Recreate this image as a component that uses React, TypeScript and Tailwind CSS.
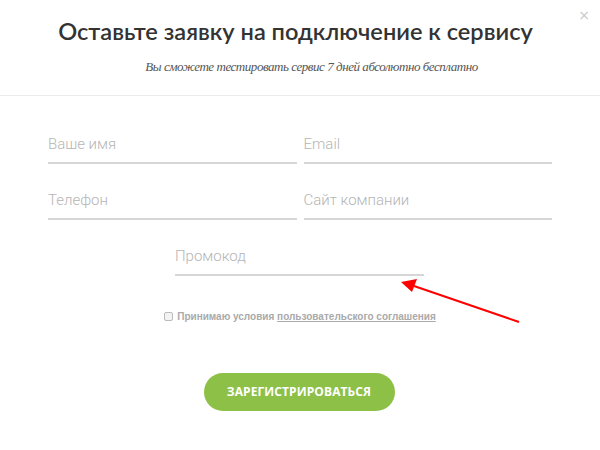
export default function App() {
  return (
    <div className="relative w-[600px] h-[450px] bg-white overflow-hidden">
      <button className="absolute right-[10px] top-[8px] text-[14px] leading-none text-[#c8c8c8] font-['DejaVu_Sans',sans-serif]">
        ×
      </button>
      <div className="h-[96px] border-b border-[#ececec] flex flex-col items-center pt-[15px]">
        <h1 className="mr-[9px] text-[23.6px] leading-[32px] text-[#333] font-['Lato',sans-serif] font-semibold">
          Оставьте заявку на подключение к сервису
        </h1>
        <p className="ml-[23px] mt-[11px] text-[13px] leading-[18px] italic text-[#555] font-['Liberation_Serif',serif] tracking-[-0.45px]">
          Вы сможете тестировать сервис 7 дней абсолютно бесплатно
        </p>
      </div>
      <div className="px-[48px] pt-[38px] font-['Roboto',sans-serif]">
        <div className="grid grid-cols-2 gap-x-[7px] gap-y-[26px]">
          <Field label="Ваше имя" />
          <Field label="Email" />
          <Field label="Телефон" />
          <Field label="Сайт компании" />
        </div>
        <div className="flex justify-center mt-[26px] pr-[1px]">
          <div className="w-[249px]">
            <Field label="Промокод" />
          </div>
        </div>
        <div className="flex justify-center items-center mt-[34px] h-[12px] text-[10px] text-[#aaa] font-['Liberation_Sans',sans-serif] font-bold">
          <span className="w-[9px] h-[9px] border border-[#bbb] rounded-[2px] bg-[#f3f3f3] mr-[4px]" />
          <span>
            Принимаю условия{" "}
            <span className="underline">пользовательского соглашения</span>
          </span>
        </div>
        <div className="flex justify-center mt-[51px] pr-[2px]">
          <button className="w-[191px] h-[38px] rounded-full bg-[#8dc047] text-white text-[12px] font-bold font-['Open_Sans',sans-serif] tracking-[0.1px]">
            ЗАРЕГИСТРИРОВАТЬСЯ
          </button>
        </div>
      </div>
      <svg className="absolute left-0 top-0 pointer-events-none" width="600" height="450">
        <line x1="519" y1="322" x2="414" y2="286" stroke="#f00" strokeWidth="2" />
        <polygon points="401,282 417,279 412,292" fill="#f00" />
      </svg>
    </div>
  );
}

function Field({ label }: { label: string }) {
  return (
    <div className="h-[30px] border-b-2 border-[#d6d6d6] flex items-start">
      <span className="text-[15px] leading-[18px] font-light text-[#b5b5b5] mt-[1px]">{label}</span>
    </div>
  );
}
